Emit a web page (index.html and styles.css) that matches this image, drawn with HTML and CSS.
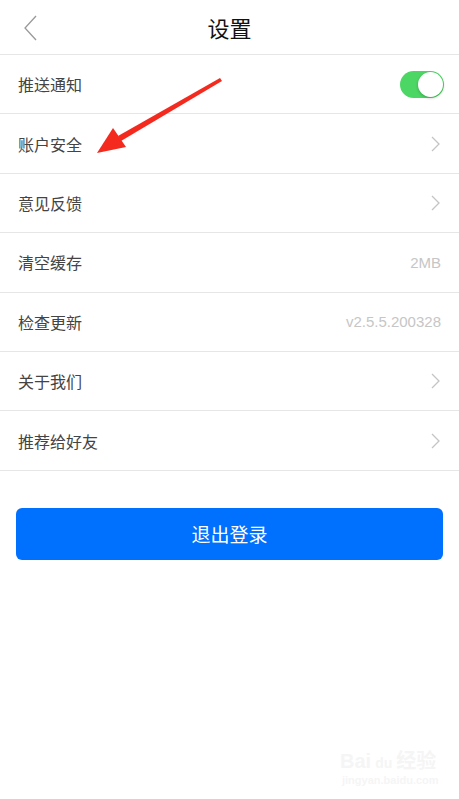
FILE: index.html
```html
<!DOCTYPE html>
<html lang="zh-CN">
<head>
  <meta charset="UTF-8">
  <title>设置</title>
  <link rel="stylesheet" href="styles.css">
</head>
<body>
  <div class="page">
    <div class="header">
      <svg class="back" width="14" height="26" viewBox="0 0 14 26">
        <path d="M12 1 L1 13 L12 25" fill="none" stroke="#999" stroke-width="1.3" />
      </svg>
      <span class="title">设置</span>
    </div>
    <ul class="list">
      <li class="row">
        <span>推送通知</span>
        <span class="switch"><span class="knob"></span></span>
      </li>
      <li class="row">
        <span>账户安全</span>
        <svg class="chev" width="9" height="16" viewBox="0 0 9 16"><path d="M1 1 L8 8 L1 15" fill="none" stroke="#c4c4c4" stroke-width="1.3" /></svg>
      </li>
      <li class="row">
        <span>意见反馈</span>
        <svg class="chev" width="9" height="16" viewBox="0 0 9 16"><path d="M1 1 L8 8 L1 15" fill="none" stroke="#c4c4c4" stroke-width="1.3" /></svg>
      </li>
      <li class="row">
        <span>清空缓存</span>
        <span class="value">2MB</span>
      </li>
      <li class="row">
        <span>检查更新</span>
        <span class="value">v2.5.5.200328</span>
      </li>
      <li class="row">
        <span>关于我们</span>
        <svg class="chev" width="9" height="16" viewBox="0 0 9 16"><path d="M1 1 L8 8 L1 15" fill="none" stroke="#c4c4c4" stroke-width="1.3" /></svg>
      </li>
      <li class="row">
        <span>推荐给好友</span>
        <svg class="chev" width="9" height="16" viewBox="0 0 9 16"><path d="M1 1 L8 8 L1 15" fill="none" stroke="#c4c4c4" stroke-width="1.3" /></svg>
      </li>
    </ul>
    <div class="actions">
      <button class="logout">退出登录</button>
    </div>

    <!-- annotation arrow drawn over the screenshot -->
    <svg class="arrow" width="459" height="200" viewBox="0 0 459 200">
      <path d="M220 78 L118 136 L121 141 L222 81 Z" fill="#f42a1f" />
      <path d="M97 153 L113 128 L126 147 Z" fill="#f42a1f" />
    </svg>

    <div class="mark">
      <div class="mark-logo">Bai<span class="du">du</span>经验</div>
      <div class="mark-url">jingyan.baidu.com</div>
    </div>
  </div>
</body>
</html>
```

FILE: styles.css
```css
* {
  box-sizing: border-box;
}
body {
  margin: 0;
  background: #fff;
  font-family: "Noto Sans CJK SC", "Liberation Sans", sans-serif;
}
.page {
  position: relative;
  width: 459px;
  height: 799px;
  overflow: hidden;
}
.header {
  position: relative;
  height: 55px;
  display: flex;
  align-items: center;
  justify-content: center;
  border-bottom: 1px solid #e6e6e6;
}
.back {
  position: absolute;
  left: 24px;
  top: 15px;
}
.title {
  font-size: 22px;
  color: #111;
}
.list {
  list-style: none;
  margin: 0;
  padding: 0;
}
.row {
  height: 59.4px;
  display: flex;
  align-items: center;
  justify-content: space-between;
  padding: 0 18px 0 18px;
  border-bottom: 1px solid #e6e6e6;
  font-size: 16px;
  color: #444;
}
.chev {
  margin-right: 1px;
}
.value {
  font-family: "Liberation Sans", sans-serif;
  font-size: 15px;
  color: #c6c6c6;
}
.switch {
  position: relative;
  width: 44px;
  height: 27px;
  border-radius: 14px;
  background: #4cd764;
  margin-right: -3px;
}
.knob {
  position: absolute;
  right: 1px;
  top: 1px;
  width: 25px;
  height: 25px;
  border-radius: 50%;
  background: #fff;
  box-shadow: 0 1px 3px rgba(0, 0, 0, 0.25);
}
.actions {
  padding: 37px 16px 0 16px;
}
.logout {
  width: 100%;
  height: 52px;
  border: 0;
  border-radius: 6px;
  background: #0070ff;
  color: #fff;
  font-family: "Noto Sans CJK SC", sans-serif;
  font-size: 19px;
}
.arrow {
  position: absolute;
  left: 0;
  top: 0;
}
.mark {
  position: absolute;
  left: 340px;
  top: 745px;
  color: #f5f5f5;
  font-family: "Liberation Sans", "Noto Sans CJK SC", sans-serif;
  font-weight: bold;
}
.mark-logo {
  font-size: 20px;
}
.du {
  font-size: 14px;
  margin-left: 4px;
  margin-right: 4px;
}
.mark-url {
  font-size: 11px;
  margin-left: 2px;
}
```
